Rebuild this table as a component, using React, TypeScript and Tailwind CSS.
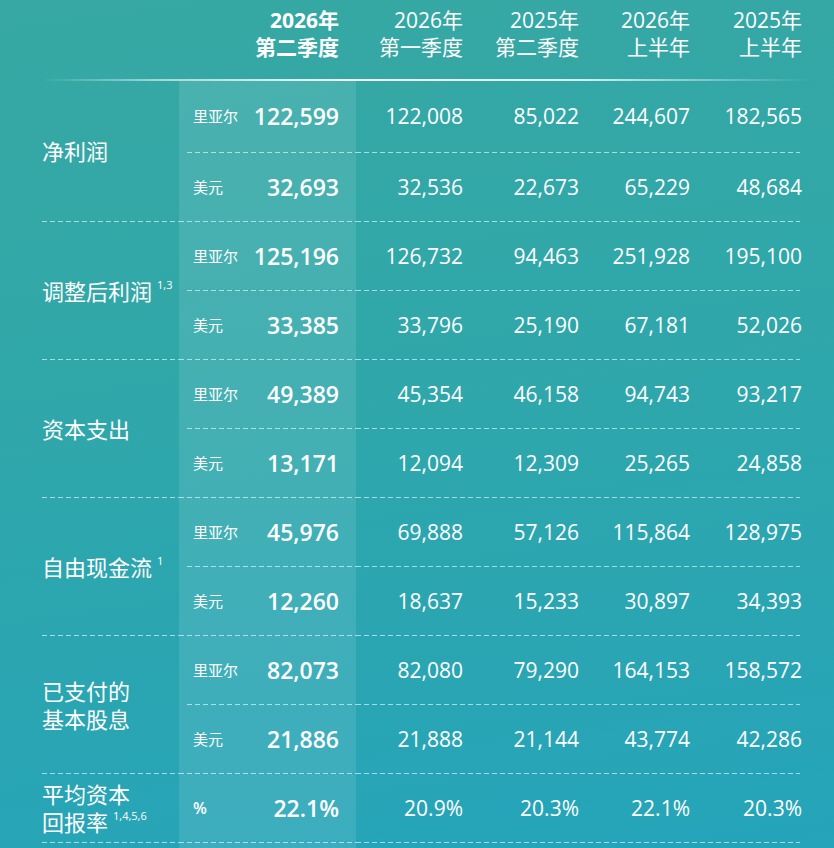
import React from 'react';

type Row = { unit: string; main: string; vals: string[] };
type Group = { label: string[]; sup?: string; rows: Row[] };

const groups: Group[] = [
  {
    label: ['净利润'],
    rows: [
      { unit: '里亚尔', main: '122,599', vals: ['122,008', '85,022', '244,607', '182,565'] },
      { unit: '美元', main: '32,693', vals: ['32,536', '22,673', '65,229', '48,684'] },
    ],
  },
  {
    label: ['调整后利润'],
    sup: '1,3',
    rows: [
      { unit: '里亚尔', main: '125,196', vals: ['126,732', '94,463', '251,928', '195,100'] },
      { unit: '美元', main: '33,385', vals: ['33,796', '25,190', '67,181', '52,026'] },
    ],
  },
  {
    label: ['资本支出'],
    rows: [
      { unit: '里亚尔', main: '49,389', vals: ['45,354', '46,158', '94,743', '93,217'] },
      { unit: '美元', main: '13,171', vals: ['12,094', '12,309', '25,265', '24,858'] },
    ],
  },
  {
    label: ['自由现金流'],
    sup: '1',
    rows: [
      { unit: '里亚尔', main: '45,976', vals: ['69,888', '57,126', '115,864', '128,975'] },
      { unit: '美元', main: '12,260', vals: ['18,637', '15,233', '30,897', '34,393'] },
    ],
  },
  {
    label: ['已支付的', '基本股息'],
    rows: [
      { unit: '里亚尔', main: '82,073', vals: ['82,080', '79,290', '164,153', '158,572'] },
      { unit: '美元', main: '21,886', vals: ['21,888', '21,144', '43,774', '42,286'] },
    ],
  },
  {
    label: ['平均资本', '回报率'],
    sup: '1,4,5,6',
    rows: [{ unit: '%', main: '22.1%', vals: ['20.9%', '20.3%', '22.1%', '20.3%'] }],
  },
];

const colW = ['w-[107px]', 'w-[116px]', 'w-[111px]', 'w-[112px]'];
const heads = [
  ['2026年', '第一季度'],
  ['2025年', '第二季度'],
  ['2026年', '上半年'],
  ['2025年', '上半年'],
];

const dash =
  'h-px bg-[linear-gradient(to_right,rgba(215,245,248,0.7)_5px,transparent_5px)] bg-[length:8px_1px] bg-repeat-x';

function DataRow({ row, first }: { row: Row; first?: boolean }) {
  const pct = row.unit === '%';
  return (
    <div className={`flex items-center ${first ? 'h-[71px]' : 'h-[68px]'}`}>
      <div className="flex h-full w-[177px] items-center justify-between bg-white/10 pl-[14px] pr-[17px]">
        <span className={pct ? 'text-[16px] font-semibold leading-none' : 'text-[15px] leading-none'}>
          {row.unit}
        </span>
        <span className="text-[23px] font-semibold leading-none">{row.main}</span>
      </div>
      {row.vals.map((v, i) => (
        <div key={i} className={`${colW[i]} text-right text-[21px] leading-none`}>
          {v}
        </div>
      ))}
    </div>
  );
}

export default function App() {
  return (
    <div
      className="relative h-[848px] w-[834px] overflow-hidden bg-[linear-gradient(172deg,#37a8a3_0%,#2fa7aa_45%,#25a4ba_100%)] text-white"
      style={{ fontFamily: '"Open Sans", "Noto Sans CJK SC", sans-serif' }}
    >
      {/* header */}
      <div className="flex h-[79px] pl-[179px] pt-[7px] text-[21px] leading-[27px]">
        <div className="w-[177px] pr-[17px] text-right font-bold">
          <div>2026年</div>
          <div>第二季度</div>
        </div>
        {heads.map((h, i) => (
          <div key={i} className={`${colW[i]} text-right`}>
            <div>{h[0]}</div>
            <div>{h[1]}</div>
          </div>
        ))}
      </div>
      <div className="ml-[42px] h-[2px] w-[770px] bg-[linear-gradient(to_right,transparent,rgba(255,255,255,0.55)_15%,rgba(255,255,255,0.95)_40%,rgba(255,255,255,0.8)_70%,transparent)]" />

      {groups.map((g, gi) => (
        <div key={gi}>
          <div className="flex pl-[42px]">
            <div className="flex w-[137px] items-center text-[22px] leading-[28px]">
              <div>
                {g.label.map((l, li) => (
                  <div key={li} className="flex items-start">
                    <span>{l}</span>
                    {g.sup && li === g.label.length - 1 && (
                      <span className="ml-[5px] mt-[2px] text-[11px] leading-[12px]">{g.sup}</span>
                    )}
                  </div>
                ))}
              </div>
            </div>
            <div className="flex flex-col">
              {g.rows.map((r, ri) => (
                <React.Fragment key={ri}>
                  {ri > 0 && (
                    <div className="flex h-px">
                      <div className="w-[177px] bg-white/10 pl-2">
                        <div className={dash} />
                      </div>
                      <div className={`w-[444px] ${dash}`} />
                    </div>
                  )}
                  <DataRow row={r} first={gi === 0 && ri === 0} />
                </React.Fragment>
              ))}
            </div>
          </div>
          <div className="flex h-px pl-[42px]">
            <div className={`w-[137px] ${dash}`} />
            <div className="w-[177px] bg-white/10">
              <div className={dash} />
            </div>
            <div className={`w-[444px] ${dash}`} />
          </div>
        </div>
      ))}
      <div className="ml-[179px] h-full w-[177px] bg-white/10" />
    </div>
  );
}
